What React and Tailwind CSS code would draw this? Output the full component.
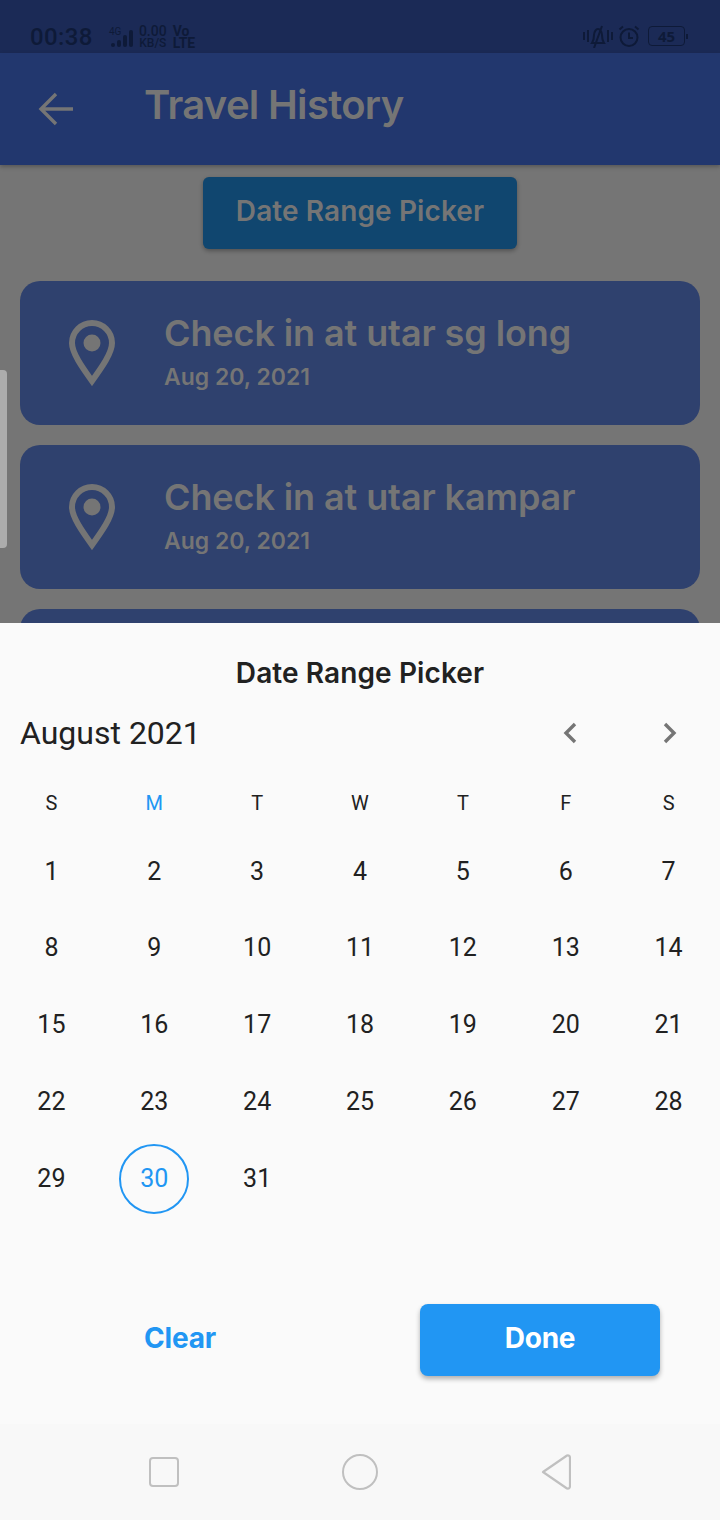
import React from 'react';

const headFont = "font-['Inter','Liberation_Sans',sans-serif]";
const calFont = "font-['Roboto','Liberation_Sans',sans-serif]";

const weekdays = ['S', 'M', 'T', 'W', 'T', 'F', 'S'];
const days = Array.from({ length: 31 }, (_, i) => i + 1);

const Pin = () => (
  <svg width="46" height="66" viewBox="0 0 46 66" fill="none">
    <path d="M23 3C12 3 3 12 3 23C3 33 13 47 23 61C33 47 43 33 43 23C43 12 34 3 23 3Z" stroke="#757575" strokeWidth="6" />
    <circle cx="23" cy="23" r="8.5" fill="#757575" />
  </svg>
);

const CheckIn = ({ place }) => (
  <div className="h-[144px] shrink-0 rounded-[20px] bg-[#2f416e] flex items-center">
    <div className="w-[144px] shrink-0 pl-[49px]">
      <Pin />
    </div>
    <div className={`${headFont} text-[#757575]`}>
      <div className="text-[36px] leading-[42px] font-semibold tracking-[-0.1px] -mt-[3px]">{place}</div>
      <div className="text-[23px] leading-[28px] font-semibold mt-[9px]">Aug 20, 2021</div>
    </div>
  </div>
);

const StatusBar = () => (
  <div className="h-[53px] shrink-0 bg-[#1b2a56] flex items-start justify-between pl-[30px] pr-[32px] pt-[23px] text-[#0e1a38]">
    <div className="flex items-center font-['Roboto',sans-serif]">
      <span className="text-[24px] leading-[28px] font-medium tracking-[0.4px]">00:38</span>
      <div className="ml-[16px] w-[24px] h-[24px] relative">
        <span className="absolute top-[2px] left-0 text-[10px] leading-[10px]">4G</span>
        <svg className="absolute left-[2px] top-[5px]" width="22" height="20" viewBox="0 0 22 20" fill="#0e1a38">
          <rect x="0" y="13" width="4" height="4" rx="2" />
          <rect x="6" y="10" width="4" height="7" rx="2" />
          <rect x="12" y="5" width="4" height="12" rx="2" />
          <rect x="18" y="0" width="4" height="17" rx="2" />
        </svg>
      </div>
      <div className="ml-[6px] flex flex-col items-center text-[12px] leading-[12px] font-medium">
        <span className="text-[14px]">0.00</span>
        <span>KB/S</span>
      </div>
      <div className="ml-[6px] flex flex-col items-start text-[14px] leading-[12px] font-bold">
        <span>Vo</span>
        <span>LTE</span>
      </div>
    </div>
    <div className="flex items-center mt-[1px]">
      <svg width="30" height="24" viewBox="0 0 30 24" fill="none" stroke="#0e1a38" strokeWidth="2">
        <path d="M1 8v8M5 6v12M25 6v12M29 8v8" />
        <path d="M9 19c2-3 2-5 2-8 0-3 2-6 4-6s4 3 4 6c0 3 0 5 2 8zM19 2L11 24" />
      </svg>
      <svg className="ml-[5px]" width="22" height="24" viewBox="0 0 22 24" fill="none" stroke="#0e1a38" strokeWidth="2">
        <circle cx="11" cy="13.5" r="8.5" />
        <path d="M11 8.5v5.5h4M1.5 5.5L5 2.5M20.5 5.5L17 2.5" />
      </svg>
      <div className="ml-[8px] w-[37px] h-[20px] rounded-[4px] border border-[#0e1a38] flex items-center justify-center text-[15px] leading-none font-bold">45</div>
      <div className="ml-[1px] w-[2px] h-[5px] bg-[#0e1a38]" />
    </div>
  </div>
);

const App = () => {
  return (
    <div className="relative w-[720px] h-[1520px] overflow-hidden bg-[#757575] flex flex-col">
      <StatusBar />

      <div className="h-[112px] shrink-0 bg-[#22376e] flex items-center pl-[36px] shadow-[0_2px_4px_rgba(0,0,0,0.25)] relative">
        <svg width="40" height="40" viewBox="0 0 40 40" fill="none" stroke="#757575" strokeWidth="3.4">
          <path d="M37 20H6M20 5L5 20L20 35" />
        </svg>
        <h1 className={`${headFont} ml-[68px] -mt-[8px] text-[40px] leading-[46px] font-semibold tracking-[-0.7px] text-[#757575]`}>Travel History</h1>
      </div>

      <div className="flex justify-center pt-[12px]">
        <div className={`${headFont} w-[314px] h-[72px] pb-[4px] rounded-[6px] bg-[#10466f] shadow-[0_2px_4px_rgba(0,0,0,0.3)] flex items-center justify-center text-[28px] font-semibold tracking-[0.1px] text-[#757575]`}>
          Date Range Picker
        </div>
      </div>

      <div className="flex flex-col gap-[20px] px-[20px] pt-[32px]">
        <CheckIn place="Check in at utar sg long" />
        <CheckIn place="Check in at utar kampar" />
        {/* third card is mostly behind the sheet */}
        <div className="h-[144px] shrink-0 rounded-[20px] bg-[#2f416e]" />
      </div>

      {/* scrollbar handle */}
      <div className="absolute left-0 top-[370px] w-[7px] h-[178px] rounded-r-[4px] bg-[#acacac]" />

      {/* bottom sheet */}
      <div className="absolute left-0 right-0 top-[623px] bottom-0 bg-[#fafafa] flex flex-col">
        <div className={`${headFont} mt-[22px] h-[56px] text-center text-[28px] leading-[56px] font-semibold tracking-[0.1px] text-[#212121]`}>
          Date Range Picker
        </div>

        <div className={`${calFont} flex items-center justify-between pl-[20px] pr-[40px] h-[50px] mt-[7px]`}>
          <span className="text-[32px] leading-[36px] text-[#212121]">August 2021</span>
          <div className="flex items-center gap-[80px]">
            <svg width="20" height="24" viewBox="0 0 20 24" fill="none" stroke="#757575" strokeWidth="3.4">
              <path d="M15 3L6 12L15 21" />
            </svg>
            <svg width="20" height="24" viewBox="0 0 20 24" fill="none" stroke="#757575" strokeWidth="3.4">
              <path d="M5 3L14 12L5 21" />
            </svg>
          </div>
        </div>

        <div className={`${calFont} grid grid-cols-7 mt-[30px] h-[30px] items-center text-center text-[20px] text-[#212121]`}>
          {weekdays.map((d, i) => (
            <span key={i} className={i === 1 ? 'text-[#2196f3]' : ''}>{d}</span>
          ))}
        </div>

        <div className={`${calFont} grid grid-cols-7 auto-rows-[76.8px] mt-[15px] text-[25px] text-[#212121]`}>
          {days.map(d => (
            <div key={d} className="flex items-center justify-center">
              {d === 30 ? (
                <span className="w-[70px] h-[70px] rounded-full border-2 border-[#2196f3] text-[#2196f3] flex items-center justify-center">{d}</span>
              ) : d}
            </div>
          ))}
        </div>

        <div className={`${headFont} flex items-center mt-[87px] pl-[60px] pr-[60px]`}>
          <div className="w-[240px] h-[72px] pb-[4px] flex items-center justify-center text-[28px] font-bold tracking-[-0.2px] text-[#2196f3]">Clear</div>
          <div className="ml-auto w-[240px] h-[72px] pb-[4px] rounded-[8px] bg-[#2196f3] shadow-[0_3px_5px_rgba(0,0,0,0.3)] flex items-center justify-center text-[28px] font-bold tracking-[-0.2px] text-white">Done</div>
        </div>

        <div className="mt-auto h-[96px] bg-[#f8f8f8] flex items-center justify-center gap-[163px]">
          <div className="w-[30px] h-[30px] rounded-[4px] border-2 border-[#c0c0c0]" />
          <div className="w-[36px] h-[36px] rounded-full border-2 border-[#c0c0c0]" />
          <svg width="30" height="36" viewBox="0 0 30 36" fill="none" stroke="#c0c0c0" strokeWidth="2.2" strokeLinejoin="round">
            <path d="M2 18L26 1.5Q29 1 29 4V32Q29 35 26 34.5Z" />
          </svg>
        </div>
      </div>
    </div>
  );
};

export default App;
